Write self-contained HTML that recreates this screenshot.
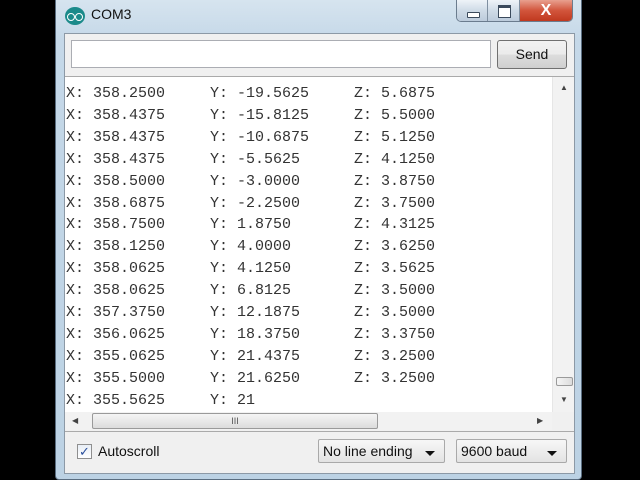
<!DOCTYPE html>
<html><head><style>
*{margin:0;padding:0;box-sizing:border-box}
body{width:640px;height:480px;background:#000;position:relative;overflow:hidden;font-family:"Liberation Sans",sans-serif}
.win{position:absolute;left:55px;top:0;width:527px;height:480px;background:linear-gradient(#d6e4ef,#c5d8e8 40px,#bcd2e4);border:1px solid #5a6d80;border-top:none;border-radius:0 0 4px 4px}
.title{position:absolute;left:35px;top:6px;font-size:14px;color:#111}
.logo{position:absolute;left:9px;top:7px;width:20px;height:18px;border-radius:50%;background:#1b8a8a}
.logo:before,.logo:after{content:"";position:absolute;top:6px;width:6px;height:6px;border:1.5px solid #fff;border-radius:50%}
.logo:before{left:2px}.logo:after{left:10px}
.btns{position:absolute;left:400px;top:0;height:22px;width:117px;border:1px solid #6b7c8e;border-top:none;border-radius:0 0 5px 5px;overflow:hidden;display:flex}
.b{height:100%;background:linear-gradient(#eef3f8,#cfdbe7 50%,#bccbdb);border-right:1px solid #7f8fa0;position:relative}
.min{width:31px}.max{width:32px}.cls{flex:1;background:linear-gradient(#e8a08f,#d2553c 50%,#c0391f);border:none;color:#fff;font-weight:bold;font-size:16px;text-align:center;line-height:21px}
.min:after{content:"";position:absolute;left:10px;top:12px;width:11px;height:4px;border:1px solid #3b4a5c;border-radius:1px;background:#fff}
.max:after{content:"";position:absolute;left:10px;top:5px;width:11px;height:9px;border:1px solid #3b4a5c;border-top-width:3px;background:#fff}
.inner{position:absolute;left:8px;top:33px;width:511px;height:441px;background:#f0f0f0;border:1px solid #8c99a6}
.input{position:absolute;left:6px;top:6px;width:420px;height:28px;background:#fff;border:1px solid #abadb3}
.send{position:absolute;left:432px;top:6px;width:70px;height:29px;border:1px solid #707070;border-radius:3px;background:linear-gradient(#f2f2f2,#ebebeb 50%,#dddddd 51%,#cfcfcf);font-size:14px;text-align:center;line-height:27px;color:#111}
.text{position:absolute;left:0;top:42px;width:509px;height:354px;background:#fff;border-top:1px solid #aaa;overflow:hidden}
pre{position:absolute;left:1px;top:6px;font-family:"Liberation Mono",monospace;font-size:15px;line-height:21.9px;color:#333}
.vs{position:absolute;right:0;top:0;width:22px;height:336px;background:#f2f2f2;border-left:1px solid #e6e6e6}
.hs{position:absolute;left:0;bottom:0;width:487px;height:18px;background:#f2f2f2}
.corner{position:absolute;right:0;bottom:0;width:22px;height:18px;background:#f0f0f0}
.hthumb{position:absolute;left:27px;top:1px;width:286px;height:16px;border:1px solid #9a9a9a;border-radius:2px;background:linear-gradient(#f5f5f5,#dcdcdc);font-size:9px;text-align:center;line-height:14px;color:#555}
.vthumb{position:absolute;left:3px;top:300px;width:17px;height:9px;border:1px solid #9a9a9a;border-radius:2px;background:linear-gradient(90deg,#f5f5f5,#dcdcdc)}
.arr{position:absolute;font-size:8px;color:#444}
.sep{position:absolute;left:0;top:397px;width:509px;border-top:1px solid #aaa}
.chk{position:absolute;left:12px;top:410px;width:15px;height:15px;border:1px solid #8f8f8f;background:linear-gradient(#e8eef6,#fff);color:#2a4f9c;font-size:13px;line-height:13px;text-align:center}
.lbl{position:absolute;left:33px;top:409px;font-size:14px;color:#111}
.sel{position:absolute;top:405px;height:24px;border:1px solid #a9a9a9;border-radius:2px;background:linear-gradient(#f7f7f7,#e3e3e3);font-size:14px;line-height:22px;padding-left:4px;color:#111}
.sel:after{content:"";position:absolute;right:9px;top:11px;border-left:5px solid transparent;border-right:5px solid transparent;border-top:5px solid #111}
</style></head><body>
<div class="win">
<div class="logo"></div><div class="title">COM3</div>
<div class="btns"><div class="b min"></div><div class="b max"></div><div class="cls">X</div></div>
<div class="inner">
<div class="input"></div>
<div class="send">Send</div>
<div class="text">
<pre>X: 358.2500     Y: -19.5625     Z: 5.6875
X: 358.4375     Y: -15.8125     Z: 5.5000
X: 358.4375     Y: -10.6875     Z: 5.1250
X: 358.4375     Y: -5.5625      Z: 4.1250
X: 358.5000     Y: -3.0000      Z: 3.8750
X: 358.6875     Y: -2.2500      Z: 3.7500
X: 358.7500     Y: 1.8750       Z: 4.3125
X: 358.1250     Y: 4.0000       Z: 3.6250
X: 358.0625     Y: 4.1250       Z: 3.5625
X: 358.0625     Y: 6.8125       Z: 3.5000
X: 357.3750     Y: 12.1875      Z: 3.5000
X: 356.0625     Y: 18.3750      Z: 3.3750
X: 355.0625     Y: 21.4375      Z: 3.2500
X: 355.5000     Y: 21.6250      Z: 3.2500
X: 355.5625     Y: 21</pre>
<div class="vs"><span class="arr" style="left:7px;top:6px">▲</span><div class="vthumb"></div><span class="arr" style="left:7px;top:318px">▼</span></div>
<div class="hs"><span class="arr" style="left:7px;top:4px">◀</span><div class="hthumb">III</div><span class="arr" style="left:472px;top:4px">▶</span></div>
<div class="corner"></div>
</div>
<div class="sep"></div>
<div class="chk">✓</div><div class="lbl">Autoscroll</div>
<div class="sel" style="left:253px;width:127px">No line ending</div>
<div class="sel" style="left:391px;width:111px">9600 baud</div>
</div>
</div>
</body></html>
